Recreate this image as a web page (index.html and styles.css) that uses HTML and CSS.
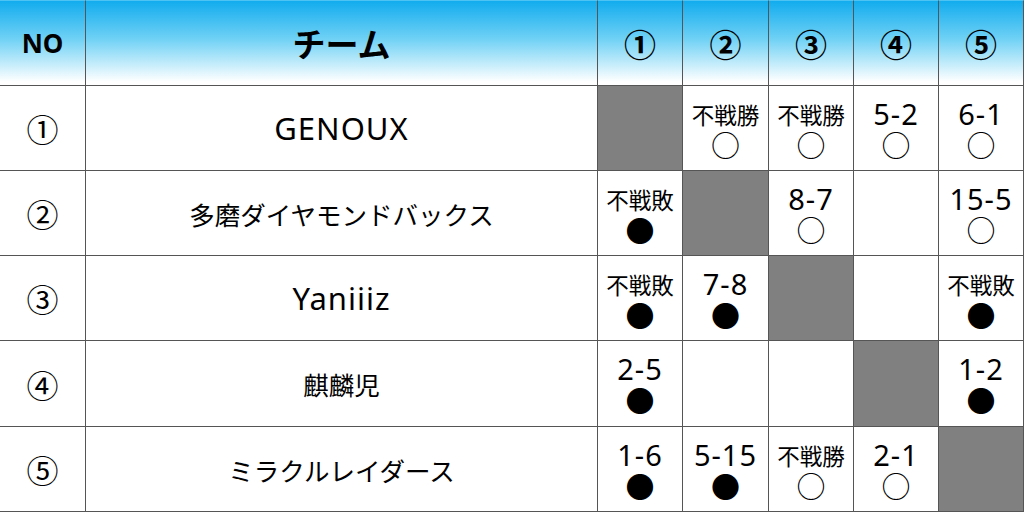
FILE: index.html
```html
<!DOCTYPE html>
<html lang="ja">
<head>
<meta charset="utf-8">
<link rel="stylesheet" href="styles.css">
</head>
<body>
<div class="league">
  <div class="cell head no">NO</div>
  <div class="cell head team-h">チーム</div>
  <div class="cell head num">①</div>
  <div class="cell head num">②</div>
  <div class="cell head num">③</div>
  <div class="cell head num">④</div>
  <div class="cell head num">⑤</div>

  <div class="cell idx">①</div>
  <div class="cell team latin">GENOUX</div>
  <div class="cell self"></div>
  <div class="cell res"><span class="word">不戦勝</span><span class="mark">○</span></div>
  <div class="cell res"><span class="word">不戦勝</span><span class="mark">○</span></div>
  <div class="cell res"><span class="score">5-2</span><span class="mark">○</span></div>
  <div class="cell res"><span class="score">6-1</span><span class="mark">○</span></div>

  <div class="cell idx">②</div>
  <div class="cell team">多磨ダイヤモンドバックス</div>
  <div class="cell res"><span class="word">不戦敗</span><span class="mark">●</span></div>
  <div class="cell self"></div>
  <div class="cell res"><span class="score">8-7</span><span class="mark">○</span></div>
  <div class="cell res"></div>
  <div class="cell res"><span class="score">15-5</span><span class="mark">○</span></div>

  <div class="cell idx">③</div>
  <div class="cell team latin">Yaniiiz</div>
  <div class="cell res"><span class="word">不戦敗</span><span class="mark">●</span></div>
  <div class="cell res"><span class="score">7-8</span><span class="mark">●</span></div>
  <div class="cell self"></div>
  <div class="cell res"></div>
  <div class="cell res"><span class="word">不戦敗</span><span class="mark">●</span></div>

  <div class="cell idx">④</div>
  <div class="cell team">麒麟児</div>
  <div class="cell res"><span class="score">2-5</span><span class="mark">●</span></div>
  <div class="cell res"></div>
  <div class="cell res"></div>
  <div class="cell self"></div>
  <div class="cell res"><span class="score">1-2</span><span class="mark">●</span></div>

  <div class="cell idx">⑤</div>
  <div class="cell team">ミラクルレイダース</div>
  <div class="cell res"><span class="score">1-6</span><span class="mark">●</span></div>
  <div class="cell res"><span class="score">5-15</span><span class="mark">●</span></div>
  <div class="cell res"><span class="word">不戦勝</span><span class="mark">○</span></div>
  <div class="cell res"><span class="score">2-1</span><span class="mark">○</span></div>
  <div class="cell self"></div>
</div>
</body>
</html>
```

FILE: styles.css
```css
html, body {
  margin: 0;
  padding: 0;
  background: #ffffff;
}

body {
  font-family: "Noto Sans", "Noto Sans CJK JP", sans-serif;
  color: #000000;
}

.league {
  display: grid;
  width: 1024px;
  height: 512px;
  grid-template-columns: 86px 512px 85px 86px 85px 85px 85px;
  grid-template-rows: 86px 85px 85px 85px 86px 85px;
}

.cell {
  box-sizing: border-box;
  border-right: 1px solid #555555;
  border-bottom: 1px solid #555555;
  display: flex;
  align-items: center;
  justify-content: center;
  background: #ffffff;
  overflow: hidden;
}

.head {
  border-top: 1px solid #4cc3f3;
  background: linear-gradient(to bottom, #12acee 0%, #6fd1f5 45%, #ffffff 96%);
  font-weight: 700;
}

.no {
  font-size: 26px;
}

.team-h {
  font-family: "Noto Sans CJK JP", sans-serif;
  font-size: 33px;
  font-weight: 700;
}

.num {
  font-family: "Noto Sans CJK JP", sans-serif;
  font-size: 32px;
  font-weight: 700;
}

.idx {
  font-family: "Noto Sans CJK JP", sans-serif;
  font-size: 32px;
}

.team {
  font-family: "Noto Sans CJK JP", sans-serif;
  font-size: 25.5px;
}

.team.latin {
  font-family: "Noto Sans", "Noto Sans CJK JP", sans-serif;
  font-size: 31px;
  letter-spacing: 1px;
}

.self {
  background: #808080;
}

.res {
  flex-direction: column;
  justify-content: flex-start;
  padding-top: 13px;
}

.word {
  font-family: "Noto Sans CJK JP", sans-serif;
  font-size: 22.5px;
  line-height: 30px;
  height: 30px;
}

.score {
  font-size: 29px;
  line-height: 30px;
  height: 30px;
  letter-spacing: 1px;
}

.mark {
  font-family: "Noto Sans CJK JP", sans-serif;
  font-size: 29px;
  line-height: 30px;
  height: 30px;
}
```
